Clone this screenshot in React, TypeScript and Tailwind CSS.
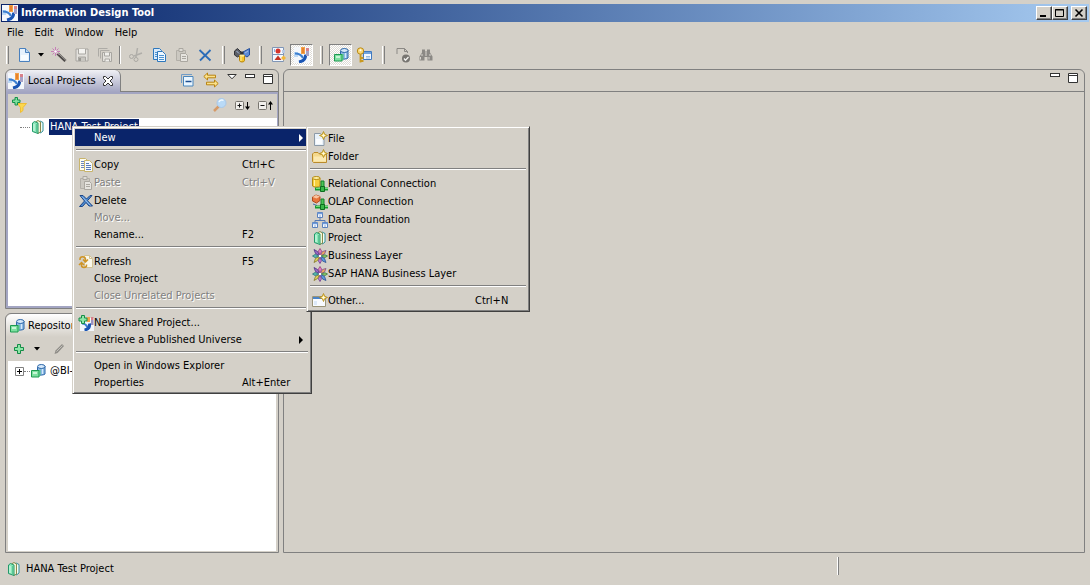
import type { ReactNode } from 'react'

type IconProps = { children: ReactNode }

function Icon({ children }: IconProps) {
  return (
    <svg viewBox="0 0 16 16" className="size-4 shrink-0" aria-hidden="true" fill="none">
      {children}
    </svg>
  )
}

const AppIcon = () => (
  <Icon>
    <rect width="16" height="16" fill="#f4f7fb" />
    <path d="M0 5h4v5H0z" fill="#bcd8f4" />
    <path d="M1 6.500c4 0 6.500 1.500 8 4.500" stroke="#3c7fd0" strokeWidth="2.200" />
    <path d="M11.500 7.500c.5 4-2 6.500-6.500 7.500" stroke="#1a55b4" strokeWidth="3" />
    <rect x="7" y="0" width="4" height="7" fill="#f2a24a" />
    <rect x="8" y="1" width="2" height="5" fill="#e8832e" />
    <rect x="12" y="4" width="3" height="5" fill="#a7a2c6" />
    <rect x="12" y="1" width="3" height="3" fill="#d8808a" />
  </Icon>
)

const ProjectIcon = () => (
  <Icon>
    <path d="M8 3.500 10 2l3 1.500v8.500L10.500 14z" fill="#f4fff8" stroke="#2f8f98" />
    <path d="M5.500 3 8 1.500l2.500 1.500v10L8 14.500z" fill="#f2f4d8" stroke="#8a8a4c" />
    <path d="M2.500 4 4.500 2.500 8 4v10.500L2.500 12.500z" fill="#8be6b8" stroke="#23986a" />
    <path d="M4 5v7" stroke="#dcfdec" />
    <path d="M6.500 5v8" stroke="#5cc894" />
  </Icon>
)

const RepoIcon = () => (
  <Icon>
    <path d="M7.500 4.500v7c0 1 7.500 1 7.500-.5V3z" fill="#8ebbe6" />
    <path d="M7.500 4v7.500c1.500 1 6 .8 7.500-.5V3" stroke="#2c66a8" />
    <ellipse cx="11.300" cy="3.500" rx="3.700" ry="2" fill="#d6e9fa" stroke="#2c66a8" />
    <path d="M12.500 6v5" stroke="#d6e9fa" />
    <path d="M1.500 7.500h7.500v6.500H1.500z" fill="#7ee0a0" stroke="#1c9a50" />
    <path d="M3 9h4v2H3z" fill="#c8f6d6" />
    <path d="M9 7.500 10.500 6.500V12L9 14" fill="#4cc07c" />
  </Icon>
)

const NewFileIcon = () => (
  <Icon>
    <path d="M3.500 1.500h6l4 4v9h-10z" fill="#e6f1fc" stroke="#4a80bd" />
    <path d="M9.500 1.500v4h4" fill="#b9d6f2" stroke="#4a80bd" />
    <path d="M5 8h7v5H5z" fill="#f8fcff" />
  </Icon>
)

const WandIcon = () => (
  <Icon>
    <path d="m6.500 6.500 8 7.500" stroke="#4d4a48" strokeWidth="3" />
    <path d="m7 6 8 7.500" stroke="#a8a4a0" />
    <path d="M4.500 0v9M0 4.500h9M1.500 1.500l6 6M7.500 1.500l-6 6" stroke="#c77fb8" />
    <circle cx="4.500" cy="4.500" r="1.300" fill="#fff" />
  </Icon>
)

const SaveIcon = () => (
  <Icon>
    <path d="M2 2h12v12H2z" fill="#e3e1dc" stroke="#a8a6a1" />
    <path d="M4.500 2v5h7V2" fill="#f4f3f0" stroke="#a8a6a1" />
    <path d="M4.500 14v-4h7v4" fill="#c8c6c0" stroke="#a8a6a1" />
    <path d="M6 11v3" stroke="#8d8b86" strokeWidth="1.500" />
  </Icon>
)

const SaveAllIcon = () => (
  <Icon>
    <path d="M1.500 9.500v-8h9M3.500 11.500v-8h9" stroke="#adaba6" />
    <path d="M5.500 5.500h9v9h-9z" fill="#e3e1dc" stroke="#a8a6a1" />
    <path d="M7.500 5.500v3.500h5V5.500M8 14.500V12h4.500v2.500" fill="#f0efec" stroke="#a8a6a1" />
  </Icon>
)

const CutIcon = () => (
  <Icon>
    <path d="M9.500 1 8 10M14 6 6 9" stroke="#b0aea9" strokeWidth="1.500" />
    <circle cx="3.500" cy="9.500" r="2" stroke="#aaa8a3" />
    <circle cx="8" cy="12.500" r="2" stroke="#aaa8a3" />
  </Icon>
)

const CopyBlueIcon = () => (
  <Icon>
    <path d="M2.500 1.500h6l2 2v9h-8z" fill="#d8eafb" stroke="#2e78bd" />
    <path d="M6.500 4.500h5l3 3v7h-8z" fill="#eef7ff" stroke="#2e78bd" />
    <path d="M8 8.500h5M8 10.500h5M8 12.500h5M4 5.500h2M4 7.500h2M4 9.500h2" stroke="#4c92d0" />
  </Icon>
)

const PasteIcon = () => (
  <Icon>
    <path d="M2.500 3.500h9v10h-9z" fill="#cbc8c1" stroke="#b2afa8" />
    <path d="M5 1.500h4v3H5z" fill="#dedcd7" stroke="#aaa7a0" />
    <path d="M6.500 6.500h5l2 2v6h-7z" fill="#e6e4df" stroke="#aaa7a0" />
    <path d="M8 9.500h4M8 11.500h4" stroke="#aaa7a0" />
  </Icon>
)

const DeleteBlueIcon = () => (
  <Icon>
    <path d="m2.500 3 11 10.500M13.500 3 3 13.500" stroke="#2b6cb8" strokeWidth="1.800" />
  </Icon>
)

const ButterflyIcon = () => (
  <Icon>
    <path d="M.5 4 3.500 1.500 7 5v2.500L3.500 10 .5 8z" fill="#5b5e66" stroke="#303238" />
    <path d="M15.500 1.500 9 5v2.500l4 2.500 2.500-2z" fill="#5c8bd6" stroke="#244f9a" />
    <path d="M2.500 4 5 6.500M11 6l3-2" stroke="#a9bfe4" />
    <path d="M5.500 8.500h5v5c0 2-5 2-5 0z" fill="#f5c52c" stroke="#b8860c" />
    <path d="M7 10v4" stroke="#fff0a0" />
    <ellipse cx="8" cy="8.500" rx="2.500" ry="1.200" fill="#ffec94" />
    <path d="M6.500 4.500h3v3h-3z" fill="#303238" />
  </Icon>
)

const CheckPageIcon = () => (
  <Icon>
    <path d="M1.500 .500h11v14h-11z" fill="#f3f8ff" stroke="#7f95b6" />
    <path d="M2 7.500h10" stroke="#7f95b6" />
    <circle cx="7" cy="4" r="2.500" fill="#d6342c" />
    <path d="m7 8.500 3.500 4.500h-7z" fill="#c43324" />
    <path d="M3.500 2v3" stroke="#8fb1de" />
    <path d="m12.500 8.500 2.500 2.500-2.500 2.500-2.500-2.500z" fill="#f1b63a" />
    <path d="M11 3h3v3h-3z" fill="#b8c9e4" />
  </Icon>
)

const KeyIcon = () => (
  <Icon>
    <path d="M7.500 4.500h8v8h-8z" fill="#f2f8ff" stroke="#3f79c0" />
    <path d="M8 5h7v2H8z" fill="#6fa2de" />
    <path d="M10 9.500h4M10 11h4" stroke="#9bbbe0" />
    <circle cx="4.500" cy="4" r="3.200" fill="#f9d774" stroke="#b98a18" />
    <circle cx="4.500" cy="3.300" r="1" fill="#fff" />
    <path d="M4.500 7v8.500M4.500 11h3M4.500 14h3" stroke="#c99920" strokeWidth="1.800" />
  </Icon>
)

const ValidateIcon = () => (
  <Icon>
    <path d="M2 7V1.500h7.500l3 3V6" stroke="#8b8985" />
    <path d="M9.500 1.500v3h3" stroke="#8b8985" />
    <circle cx="11" cy="11.500" r="4" fill="#777571" />
    <path d="m9 11.500 1.500 1.700 3-3.200" stroke="#f4f3f0" strokeWidth="1.300" />
  </Icon>
)

const BinocularsIcon = () => (
  <Icon>
    <path d="M4 2.500h3v2h2v-2h3v3l2.500 4v4H9.500V10h-3v3.500H1.500v-4l2.500-4z" fill="#8b8985" />
    <path d="M4 7v2M2.500 10v2.500M12 7v2M11 10v2.500M7 6h2M7 8h2" stroke="#d9d6d0" />
  </Icon>
)

const CollapseAllIcon = () => (
  <Icon>
    <path d="M2.500 11V2.500H13" fill="none" stroke="#6f9cc8" />
    <path d="M4.500 4.500h9.500v9.500H4.500z" fill="#eaf6ff" stroke="#4a86bc" />
    <path d="M6.500 9.500h6" stroke="#1d4f91" strokeWidth="1.500" />
  </Icon>
)

const LinkIcon = () => (
  <Icon>
    <path d="M.8 4.500 4.500 1v2.200h8v2.600h-8V8z" fill="#fbe28a" stroke="#b98310" />
    <path d="M15.200 11.500 11.500 8v2.200h-8v2.600h8V15z" fill="#fbe28a" stroke="#b98310" />
  </Icon>
)

const FilterAddIcon = () => (
  <Icon>
    <path d="M6.500 6.500h9L12 10.500v3l-2.500 2V10.500z" fill="#fbd84e" stroke="#efbc34" />
    <path d="M4 .5h2.500V3H9v2.500H6.500V8H4V5.500H1.500V3H4z" fill="#7de09c" stroke="#14904a" />
  </Icon>
)

const MagnifierIcon = () => (
  <Icon>
    <path d="m2 14 5-5" stroke="#d59a68" strokeWidth="2.500" />
    <circle cx="9.500" cy="6" r="4.500" fill="#b9daf7" stroke="#a9c8e8" />
    <path d="M7 5c1-2 3-2.500 4.500-1.500" stroke="#f2faff" strokeWidth="1.500" />
  </Icon>
)

const ExpandIcon = ({ up }: { up?: boolean }) => (
  <Icon>
    <rect x=".5" y="4.500" width="8" height="8" rx="1" fill="#f1efeb" stroke="#77746e" />
    <path d={up ? 'M2.500 8.500h4' : 'M2.500 8.500h4M4.500 6.500v4'} stroke="#111" />
    <path d={up ? 'M12.500 13V6' : 'M12.500 5v6'} stroke="#000" />
    <path d={up ? 'm10 7.500 2.500-3.500L15 7.500z' : 'm10 9.500 2.500 3.500L15 9.500z'} fill="#000" />
  </Icon>
)

const PlusIcon = () => (
  <Icon>
    <path d="M6.500 3.500h3v3h3v3h-3v3h-3v-3h-3v-3h3z" fill="#8ee6a8" stroke="#148c46" />
  </Icon>
)

const PencilIcon = () => (
  <Icon>
    <path d="m3.500 13 1-3.500 6.500-6.500 2 2L6.500 12z" fill="#8f8d88" />
    <path d="m5.500 10.500 6-6" stroke="#c4c2bc" />
  </Icon>
)

const CopyPagesIcon = () => (
  <Icon>
    <path d="M1.500 1.500h6l2 2v10h-8z" fill="#fffdf0" stroke="#c8b46c" />
    <path d="M3 4.500h3M3 6.500h3M3 8.500h3M3 10.500h3" stroke="#6a86c0" />
    <path d="M6.500 3.500h5l3 3v8h-8z" fill="#f6faff" stroke="#c8b46c" />
    <path d="M8 6.500h3M8 8.500h5M8 10.500h5M8 12.500h5" stroke="#5a7ab8" />
  </Icon>
)

const DeleteIcon = () => (
  <Icon>
    <path d="M2 2.500h3L8.500 6 12 2.500h2L9.500 7.700 14.500 13h-3.500L8 9.500 4.500 13.500h-3L6.500 8z" fill="#4d8ad0" stroke="#1c4688" />
    <path d="m4 3.500 8.500 9" stroke="#9cc4f0" />
  </Icon>
)

const RefreshIcon = () => (
  <Icon>
    <path d="M6.500 1.500h5l3 3v9h-8z" fill="#f9f7ea" stroke="#d3c294" />
    <path d="M11.500 1.500v3h3" stroke="#d3c294" />
    <path d="M2 6V5c0-3 5-3 5.500 0v2M5 5.500 7.500 8 10 5.500" stroke="#cf9424" strokeWidth="1.500" />
    <path d="M8.500 10.500v1c0 2.500-5 2.500-5 0V9M1 11l2.500-2.500L6 11" stroke="#cf9424" strokeWidth="1.500" />
  </Icon>
)

const SharedProjectIcon = () => (
  <Icon>
    <path d="M2 3h14v13H2z" fill="#f2f6fb" />
    <path d="M4 8.500c3 0 4.500 1.500 5.500 4" stroke="#3c7fd0" strokeWidth="2" />
    <path d="M11.500 8.500c.5 4-1.500 6-5 6.500" stroke="#1a55b4" strokeWidth="3" />
    <path d="M9 2h3v5H9z" fill="#f2a24a" />
    <path d="M13 2h2.500v3H13z" fill="#d8808a" />
    <path d="M13 5h2.500v5H13z" fill="#9a92c0" />
    <path d="M3.500 .500h3v2.500H9v3H6.500v2.500h-3V6H1V3h2.500z" fill="#8ee6a8" stroke="#148c46" />
  </Icon>
)

const Spark = () => (
  <>
    <path d="m11.500.5 1.200 2.800 2.800 1.200-2.800 1.200-1.200 2.800-1.200-2.800-2.800-1.200 2.800-1.200z" fill="#fbe07c" stroke="#b08714" strokeWidth=".8" />
    <path d="M11.500 3v3M10 4.500h3" stroke="#fffbe2" strokeWidth=".8" />
  </>
)

const FileSparkIcon = () => (
  <Icon>
    <path d="M2.500 2.500h6l3.500 4v8H2.500z" fill="#e9f2fa" stroke="#8c9aa8" />
    <path d="M4 8h6v5H4z" fill="#fbfdff" />
    <Spark />
  </Icon>
)

const FolderSparkIcon = () => (
  <Icon>
    <path d="M.5 5 2 3.500h4L7.500 5h7v8.500H1.500l-1-1z" fill="#f5d98c" stroke="#b98a2c" />
    <path d="M2 7.500h12v5H2z" fill="#fbe9b2" />
    <Spark />
  </Icon>
)

const Plug = () => (
  <>
    <path d="M9 5h3v7H9z" fill="#4cc458" stroke="#14802a" />
    <path d="M3 11.500h13v3H3z" fill="#169a2e" />
    <path d="M4 12.500h12" stroke="#6fe07a" />
    <path d="M8.500 10.500h4v5h-4z" fill="#3ab84a" stroke="#0d6d1e" />
  </>
)

const RelationalIcon = () => (
  <Icon>
    <path d="M.5 2v8c1 1.500 6 1.500 7.500 0V2z" fill="#f6cf3c" stroke="#b58a10" />
    <path d="M2.500 4v6" stroke="#fff2a4" />
    <ellipse cx="4.300" cy="2" rx="3.800" ry="1.500" fill="#fff0a0" stroke="#b58a10" />
    <Plug />
  </Icon>
)

const OlapIcon = () => (
  <Icon>
    <path d="m.5 3 3.500-2 4 1.500v4L4.500 9l-4-2z" fill="#e8763c" stroke="#b04a20" />
    <path d="m.5 3 4 1.500L8 2.500 4 1z" fill="#f9c4a0" />
    <path d="m1 10 4 1.500" stroke="#4a6cb0" />
    <Plug />
  </Icon>
)

const FoundationIcon = () => (
  <Icon>
    <path d="M8 5v4M3 11V8.500h10V11" stroke="#5578b4" />
    <path d="M5.500.5h5v5h-5zM.5 10.500h5v5h-5zM10.500 10.500h5v5h-5z" fill="#f3f8ff" stroke="#5a80bc" />
    <path d="M5.500 1.500h5M.5 11.500h5M10.500 11.500h5" stroke="#6f9bdc" strokeWidth="1.500" />
    <path d="M7 4h2M2 14h2M12 14h2" stroke="#8aa9d6" />
  </Icon>
)

const LayerIcon = () => (
  <Icon>
    <path d="M8 8 6.500 3 8 .5 9.500 3z" fill="#e889c8" stroke="#963a7c" strokeWidth=".8" />
    <path d="m8 8 2.500-4.500 3.500-1-1.500 3.500z" fill="#f0a95c" stroke="#7c4c90" strokeWidth=".8" />
    <path d="m8 8 5-1.200 2.500 1.200L13 9.500z" fill="#8fd06c" stroke="#3c7840" strokeWidth=".8" />
    <path d="m8 8 4.500 2.500 1.500 4-3.500-1.500z" fill="#5c9be0" stroke="#2c4f90" strokeWidth=".8" />
    <path d="m8 8 1.300 5L8 15.500 6.500 13z" fill="#c88ae0" stroke="#6c3a88" strokeWidth=".8" />
    <path d="m8 8-2.500 4.500-3.500 2 1.500-4z" fill="#e4d85c" stroke="#807428" strokeWidth=".8" />
    <path d="M8 8 3 9.500.5 8 3 6.500z" fill="#5ac0b0" stroke="#28707c" strokeWidth=".8" />
    <path d="M8 8 3.500 5.500 2 1.500l3.500 2z" fill="#9c6cc8" stroke="#483080" strokeWidth=".8" />
    <circle cx="8" cy="8" r="1.300" fill="#fff" />
  </Icon>
)

const OtherIcon = () => (
  <Icon>
    <path d="M.5 3.500h13v10H.5z" fill="#f8fbff" stroke="#9a9478" />
    <path d="M1 4h9v2H1z" fill="#4a84c8" />
    <path d="M2 8h3v4H2z" fill="#dce9f8" />
    <Spark />
  </Icon>
)

const DownArrow = () => (
  <svg viewBox="0 0 7 4" className="h-1 w-[7px]" aria-hidden="true">
    <path d="M0 0h6L3 3.500z" fill="#000" />
  </svg>
)

const MinimizeGlyph = () => (
  <svg viewBox="0 0 10 4" className="h-1 w-2.5" aria-hidden="true">
    <rect x=".5" y=".5" width="9" height="3" fill="#fff" stroke="#333" />
  </svg>
)

const MaximizeGlyph = () => (
  <svg viewBox="0 0 10 10" className="size-2.5" aria-hidden="true">
    <path d="M.5.5h9v9h-9zM.5 2.500h9" fill="#fff" stroke="#333" />
  </svg>
)

function TitleButton({ label, children }: { label: string; children: ReactNode }) {
  return (
    <button
      type="button"
      aria-label={label}
      className="flex h-[14px] w-4 items-center justify-center border border-t-white border-r-[#404040] border-b-[#404040] border-l-white bg-[#d4d0c8] shadow-[inset_-1px_-1px_0_#808080]"
    >
      <svg viewBox="0 0 12 10" className="h-2.5 w-3" aria-hidden="true" fill="none" stroke="#000">
        {children}
      </svg>
    </button>
  )
}

function ToolButton({ label, pressed, children }: { label: string; pressed?: boolean; children: ReactNode }) {
  return (
    <button
      type="button"
      aria-label={label}
      aria-pressed={pressed}
      className={
        pressed
          ? 'flex h-[22px] w-[23px] items-center justify-center border border-t-[#808080] border-r-white border-b-white border-l-[#808080] bg-[conic-gradient(#fff_25%,#dedbd5_0_50%,#fff_0_75%,#dedbd5_0)] bg-size-[2px_2px]'
          : 'flex h-[22px] w-[23px] items-center justify-center'
      }
    >
      {children}
    </button>
  )
}

function Grip({ size }: { size: 'start' | 'line' | 'small' | 'large' }) {
  if (size === 'line') {
    return (
      <div className="flex w-2 justify-center">
        <div className="h-[18px] w-0.5 border-r border-l border-r-white border-l-[#808080]" />
      </div>
    )
  }
  return (
    <div className={size === 'start' ? 'w-1.5' : size === 'small' ? 'flex w-3.5 justify-center' : 'flex w-4 justify-center'}>
      <div className="h-[18px] w-[3px] border-r border-l border-r-[#808080] border-l-white" />
    </div>
  )
}

type Entry =
  | 'separator'
  | { label: string; icon?: ReactNode; keys?: string; disabled?: boolean; active?: boolean; submenu?: boolean }

const contextMenu: Entry[] = [
  { label: 'New', active: true, submenu: true },
  'separator',
  { label: 'Copy', icon: <CopyPagesIcon />, keys: 'Ctrl+C' },
  { label: 'Paste', icon: <PasteIcon />, keys: 'Ctrl+V', disabled: true },
  { label: 'Delete', icon: <DeleteIcon /> },
  { label: 'Move...', disabled: true },
  { label: 'Rename...', keys: 'F2' },
  'separator',
  { label: 'Refresh', icon: <RefreshIcon />, keys: 'F5' },
  { label: 'Close Project' },
  { label: 'Close Unrelated Projects', disabled: true },
  'separator',
  { label: 'New Shared Project...', icon: <SharedProjectIcon /> },
  { label: 'Retrieve a Published Universe', submenu: true },
  'separator',
  { label: 'Open in Windows Explorer' },
  { label: 'Properties', keys: 'Alt+Enter' },
]

const newMenu: Entry[] = [
  { label: 'File', icon: <FileSparkIcon /> },
  { label: 'Folder', icon: <FolderSparkIcon /> },
  'separator',
  { label: 'Relational Connection', icon: <RelationalIcon /> },
  { label: 'OLAP Connection', icon: <OlapIcon /> },
  { label: 'Data Foundation', icon: <FoundationIcon /> },
  { label: 'Project', icon: <ProjectIcon /> },
  { label: 'Business Layer', icon: <LayerIcon /> },
  { label: 'SAP HANA Business Layer', icon: <LayerIcon /> },
  'separator',
  { label: 'Other...', icon: <OtherIcon />, keys: 'Ctrl+N' },
]

function Menu({ label, entries, className, keysClass }: { label: string; entries: Entry[]; className: string; keysClass: string }) {
  return (
    <div
      role="menu"
      aria-label={label}
      className={`absolute border border-t-[#d4d0c8] border-r-[#404040] border-b-[#404040] border-l-[#d4d0c8] bg-[#d4d0c8] p-0.5 shadow-[inset_1px_1px_0_#fff,inset_-1px_-1px_0_#808080] ${className}`}
    >
      {entries.map((entry, i) =>
        entry === 'separator' ? (
          <div key={i} role="separator" className="px-px pt-[3px] pb-1">
            <div className="h-0.5 border-t border-b border-t-[#808080] border-b-white" />
          </div>
        ) : (
          <button
            key={i}
            type="button"
            role="menuitem"
            disabled={entry.disabled}
            className={`flex w-full pl-[3px] text-left ${entry.icon ? 'h-[18px] items-end' : 'h-[17px] items-center'} ${
              entry.active ? 'bg-[#0a246a] text-white' : entry.disabled ? 'text-[#808080] [text-shadow:1px_1px_0_#fff]' : ''
            }`}
          >
            <span className="w-4 shrink-0">{entry.icon}</span>
            <span className="flex-1 whitespace-nowrap">{entry.label}</span>
            {entry.keys && <span className={`shrink-0 ${keysClass}`}>{entry.keys}</span>}
            {entry.submenu && (
              <svg viewBox="0 0 4 8" className="mr-1.5 h-2 w-1" aria-hidden="true">
                <path d="M0 0v8l4-4z" fill="currentColor" />
              </svg>
            )}
          </button>
        ),
      )}
    </div>
  )
}

export default function App() {
  return (
    <div className="relative flex min-h-screen flex-col bg-[#d4d0c8] font-['Tahoma','DejaVu_Sans_Condensed','DejaVu_Sans',sans-serif] text-[11px] leading-4 text-black">
      <header className="mx-px mt-1 flex h-[18px] items-center gap-[3px] bg-linear-to-r from-[#0a246a] to-[#a6caf0] pr-0.5 pl-px">
        <AppIcon />
        <h1 className="flex-1 font-bold text-white">Information Design Tool</h1>
        <div className="flex">
          <TitleButton label="Minimize window">
            <path d="M2 8h6" strokeWidth="2" />
          </TitleButton>
          <TitleButton label="Maximize window">
            <path d="M1.500 1.500h8v7h-8zM1 2h9" />
          </TitleButton>
        </div>
        <TitleButton label="Close window">
          <path d="m2.500 1.500 7 7M9.500 1.500l-7 7" strokeWidth="1.600" />
        </TitleButton>
      </header>

      <nav className="flex h-5 items-end gap-[11px] px-[7px] pb-px" aria-label="Main menu">
        <button type="button">File</button>
        <button type="button">Edit</button>
        <button type="button">Window</button>
        <button type="button">Help</button>
      </nav>

      <div role="toolbar" aria-label="Main toolbar" className="flex h-[27px] items-center pb-px pl-1.5">
        <Grip size="start" />
        <ToolButton label="New"><NewFileIcon /></ToolButton>
        <button type="button" aria-label="New options" className="flex h-[22px] w-3 items-center justify-center"><DownArrow /></button>
        <ToolButton label="Wizard"><WandIcon /></ToolButton>
        <ToolButton label="Save"><SaveIcon /></ToolButton>
        <ToolButton label="Save all"><SaveAllIcon /></ToolButton>
        <Grip size="line" />
        <ToolButton label="Cut"><CutIcon /></ToolButton>
        <ToolButton label="Copy"><CopyBlueIcon /></ToolButton>
        <ToolButton label="Paste"><PasteIcon /></ToolButton>
        <ToolButton label="Delete"><DeleteBlueIcon /></ToolButton>
        <Grip size="small" />
        <ToolButton label="Federation"><ButterflyIcon /></ToolButton>
        <Grip size="small" />
        <ToolButton label="Check integrity"><CheckPageIcon /></ToolButton>
        <ToolButton label="Local projects" pressed><AppIcon /></ToolButton>
        <Grip size="large" />
        <ToolButton label="Repository resources" pressed><RepoIcon /></ToolButton>
        <ToolButton label="Security editor"><KeyIcon /></ToolButton>
        <Grip size="large" />
        <ToolButton label="Validate"><ValidateIcon /></ToolButton>
        <ToolButton label="Find"><BinocularsIcon /></ToolButton>
      </div>

      <main className="flex flex-1 gap-1 px-[5px]">
        <div className="flex w-[274px] shrink-0 flex-col gap-1">
          <section className="flex flex-1 flex-col rounded-t-md border border-[#808080]" aria-label="Local Projects">
            <div className="flex h-[22px] items-stretch justify-between">
              <div className="flex w-[115px] items-center rounded-t-md border-r border-[#808080] bg-linear-to-b from-[#f0f0f4] to-[#a3a5c2] pl-0.5">
                <AppIcon />
                <h2 className="ml-1 flex-1 whitespace-nowrap">Local Projects</h2>
                <button type="button" aria-label="Close Local Projects" className="mr-1.5">
                  <svg viewBox="0 0 12 12" className="size-3" aria-hidden="true">
                    <path d="M1.500 1.500h2L6 4l2.500-2.500h2v2L8 6l2.500 2.500v2h-2L6 8l-2.500 2.500h-2v-2L4 6 1.500 3.500z" fill="#fff" stroke="#333" />
                  </svg>
                </button>
              </div>
              <div className="flex flex-1 items-start gap-2 border-b border-[#808080] pt-0.5 pr-[5px]">
                <span className="flex-1" />
                <button type="button" aria-label="Collapse all"><CollapseAllIcon /></button>
                <button type="button" aria-label="Link with editor"><LinkIcon /></button>
                <button type="button" aria-label="View menu" className="pt-0.5">
                  <svg viewBox="0 0 10 6" className="h-1.5 w-2.5" aria-hidden="true">
                    <path d="M.8.500h8.400L5 4.800z" fill="#fff" stroke="#333" />
                  </svg>
                </button>
                <button type="button" aria-label="Minimize view" className="pt-0.5"><MinimizeGlyph /></button>
                <button type="button" aria-label="Maximize view" className="pt-0.5"><MaximizeGlyph /></button>
              </div>
            </div>
            <div className="flex flex-1 flex-col border-2 border-r-0 border-[#a3a5c2]">
              <div className="flex flex-1 flex-col border-r border-[#a3a5c2]">
                <div role="toolbar" aria-label="Local Projects toolbar" className="flex h-6 items-center gap-[7px] pr-[3px] pb-0.5 pl-[3px]">
                  <button type="button" aria-label="Add filter"><FilterAddIcon /></button>
                  <span className="flex-1" />
                  <button type="button" aria-label="Search"><MagnifierIcon /></button>
                  <button type="button" aria-label="Expand"><ExpandIcon /></button>
                  <button type="button" aria-label="Collapse"><ExpandIcon up /></button>
                </div>
                <div role="tree" aria-label="Projects" className="flex-1 bg-white pt-px">
                  <div role="treeitem" aria-selected="true" className="flex items-center pl-3">
                    <span className="w-2.5 border-t border-dotted border-[#808080]" />
                    <ProjectIcon />
                    <span className="ml-[3px] bg-[#0a246a] px-px whitespace-nowrap text-white">HANA Test Project</span>
                  </div>
                </div>
              </div>
            </div>
          </section>

          <section className="flex flex-1 flex-col rounded-t-md border border-[#808080]" aria-label="Repository Resources">
            <div className="flex h-[23px] items-center rounded-t-md bg-linear-to-b from-white to-[#d4d0c8] pl-[3px]">
              <RepoIcon />
              <h2 className="ml-[3px] w-11 overflow-hidden whitespace-nowrap">Repository</h2>
            </div>
            <div role="toolbar" aria-label="Repository toolbar" className="flex h-6 items-center pl-[5px]">
              <button type="button" aria-label="Add"><PlusIcon /></button>
              <button type="button" aria-label="Add options" className="ml-[7px]"><DownArrow /></button>
              <button type="button" aria-label="Edit" className="ml-2.5"><PencilIcon /></button>
            </div>
            <div className="flex flex-1 px-0.5 pb-px">
              <div role="tree" aria-label="Repositories" className="flex-1 bg-white pt-0.5">
                <div role="treeitem" aria-selected="false" className="flex items-center pl-[7px]">
                  <svg viewBox="0 0 9 9" className="size-[9px]" aria-hidden="true">
                    <path d="M.5.5h8v8h-8z" fill="#fff" stroke="#808080" />
                    <path d="M2 4.500h5M4.500 2v5" stroke="#000" />
                  </svg>
                  <span className="w-1.5 border-t border-dotted border-[#808080]" />
                  <RepoIcon />
                  <span className="ml-1 whitespace-nowrap">@BI-</span>
                </div>
              </div>
            </div>
          </section>
        </div>

        <section className="flex flex-1 flex-col rounded-t-md border border-[#808080]" aria-label="Editor area">
          <div className="flex h-[22px] items-start justify-end gap-2 border-b border-[#808080] pt-[3px] pr-1.5">
            <button type="button" aria-label="Minimize editor"><MinimizeGlyph /></button>
            <button type="button" aria-label="Maximize editor"><MaximizeGlyph /></button>
          </div>
        </section>
      </main>

      <footer className="flex h-8 items-center pl-1.5">
        <ProjectIcon />
        <span className="ml-1 flex-1">HANA Test Project</span>
        <div className="mb-1.5 h-[18px] w-[253px] border-l border-white">
          <div className="h-full w-px bg-[#808080]" />
        </div>
      </footer>

      <Menu label="Project" entries={contextMenu} className="top-[126px] left-[72px] w-60" keysClass="w-[67px]" />
      <Menu label="New" entries={newMenu} className="top-[126px] left-[306px] w-56" keysClass="w-[52px]" />
    </div>
  )
}
